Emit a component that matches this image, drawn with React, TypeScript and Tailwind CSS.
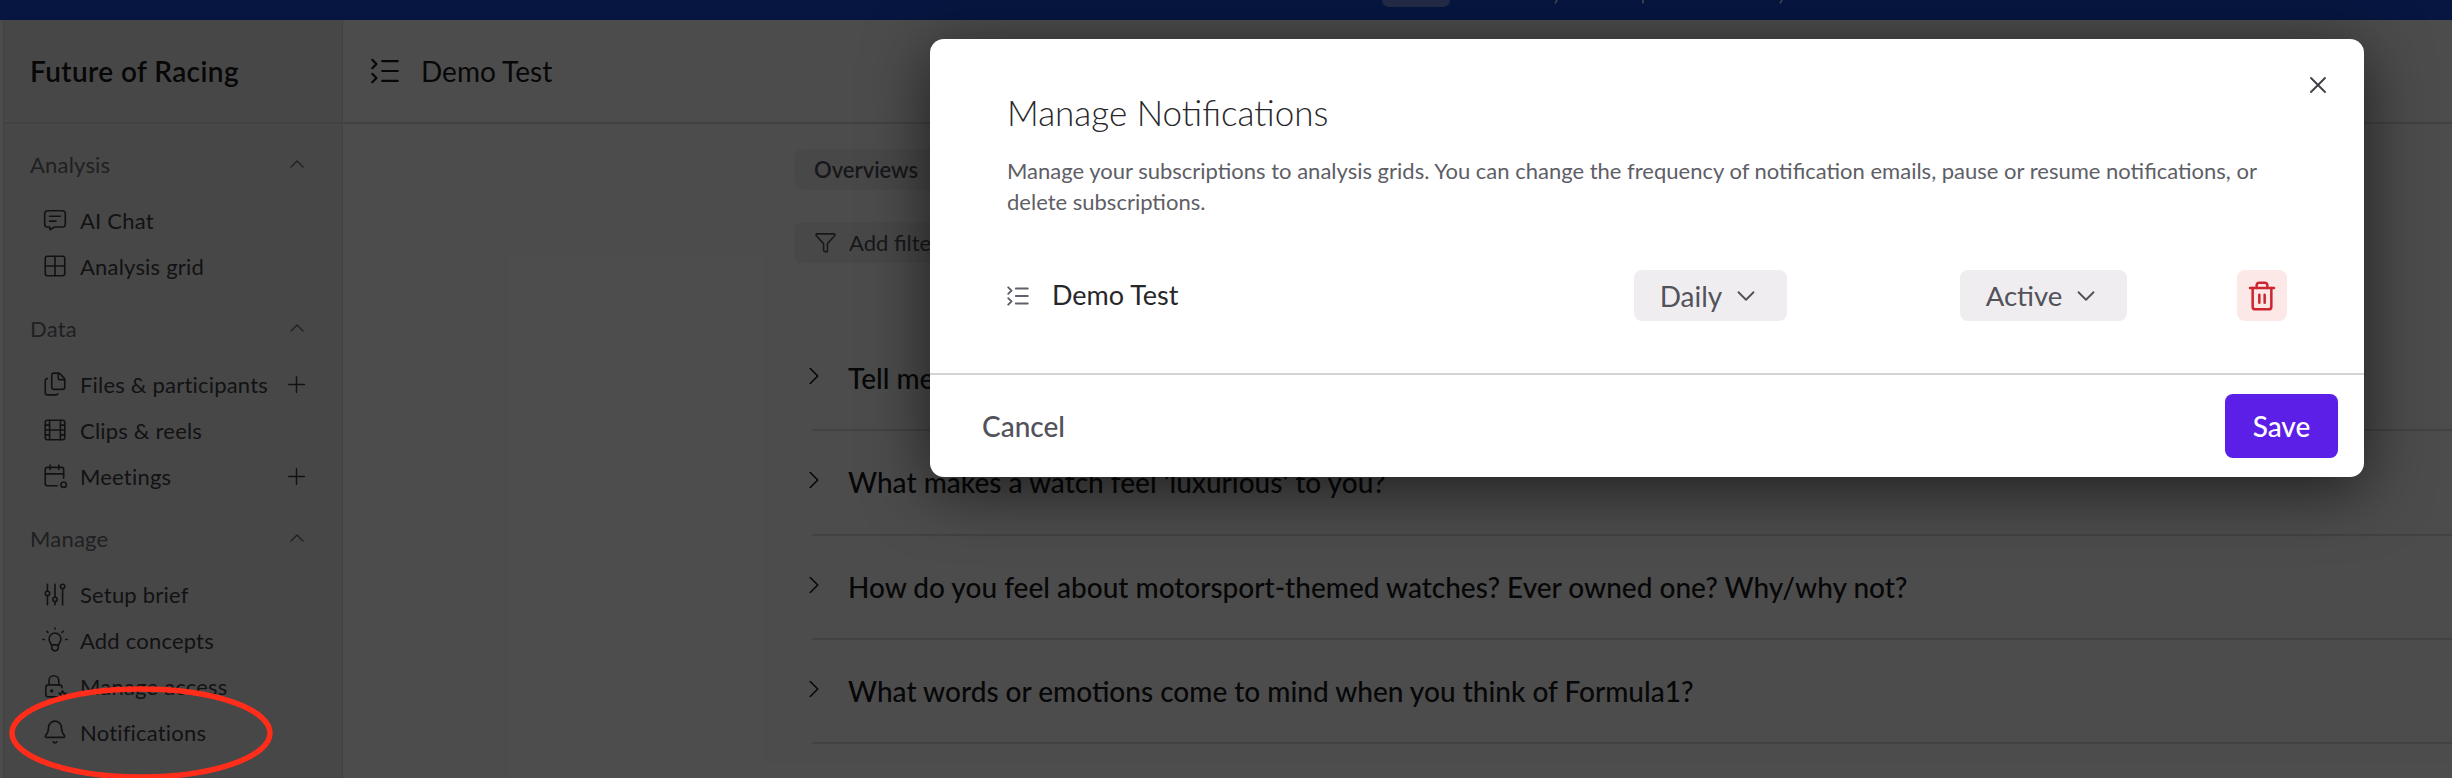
import {
  Bell,
  ChevronDown,
  ChevronRight,
  ChevronUp,
  Files,
  Film,
  Filter,
  Grid2x2,
  ListCollapse,
  Plus,
  Trash2,
  X,
} from 'lucide-react';
import type { ComponentType } from 'react';

// ---------------------------------------------------------------------------
// Icons the package has no close match for
// ---------------------------------------------------------------------------

type IconProps = { size?: number; strokeWidth?: number };

function ChatIcon({ size = 26, strokeWidth = 1.6 }: IconProps) {
  return (
    <svg width={size} height={size} viewBox="0 0 24 24" fill="none" stroke="currentColor" strokeWidth={strokeWidth} strokeLinecap="round" strokeLinejoin="round">
      <path d="M5 3.5h14a2.5 2.5 0 0 1 2.5 2.5v10a2.5 2.5 0 0 1-2.5 2.5h-7.5l-4 2.5-.5-2.5H5A2.5 2.5 0 0 1 2.5 16V6A2.5 2.5 0 0 1 5 3.5Z" />
      <path d="M7 8.5h10M7 13h6" />
    </svg>
  );
}

function CalendarDotIcon({ size = 26, strokeWidth = 1.6 }: IconProps) {
  return (
    <svg width={size} height={size} viewBox="0 0 24 24" fill="none" stroke="currentColor" strokeWidth={strokeWidth} strokeLinecap="round" strokeLinejoin="round">
      <path d="M14 21H5a2 2 0 0 1-2-2V6a2 2 0 0 1 2-2h13a2 2 0 0 1 2 2v8" />
      <path d="M3 10h17M7.5 2v4M15.5 2v4" />
      <circle cx="20" cy="20" r="2.5" />
    </svg>
  );
}

function SlidersIcon({ size = 26, strokeWidth = 1.6 }: IconProps) {
  return (
    <svg width={size} height={size} viewBox="0 0 24 24" fill="none" stroke="currentColor" strokeWidth={strokeWidth} strokeLinecap="round" strokeLinejoin="round">
      <path d="M5 3v6.5M5 13.5V22M12 3v12M12 19v3M19 7v15" />
      <circle cx="5" cy="11.5" r="2" />
      <circle cx="12" cy="17" r="2" />
      <circle cx="19" cy="5" r="2" />
    </svg>
  );
}

function BulbIcon({ size = 26, strokeWidth = 1.6 }: IconProps) {
  return (
    <svg width={size} height={size} viewBox="0 0 24 24" fill="none" stroke="currentColor" strokeWidth={strokeWidth} strokeLinecap="round" strokeLinejoin="round">
      <path d="M8.6 16.5c0-1.6-2.1-2.6-2.1-5.5a5.5 5.5 0 0 1 11 0c0 2.9-2.1 3.9-2.1 5.5Z" />
      <path d="M9 16.5V19a3 3 0 0 0 6 0v-2.5M.8 11.5h1.4M21.8 11.5h1.4M4.5 4l1 1M19.5 4l-1 1M12 1v.8" />
    </svg>
  );
}

function LockStarIcon({ size = 26, strokeWidth = 1.6 }: IconProps) {
  return (
    <svg width={size} height={size} viewBox="0 0 24 24" fill="none" stroke="currentColor" strokeWidth={strokeWidth} strokeLinecap="round" strokeLinejoin="round">
      <path d="M14 22H6a2.5 2.5 0 0 1-2.5-2.5v-6A2.5 2.5 0 0 1 6 11h10a2.5 2.5 0 0 1 2.5 2.5" />
      <path d="M6.5 11V7a4.5 4.5 0 0 1 9 0v4" />
      <circle cx="9" cy="16.5" r="0.8" fill="currentColor" />
      <path d="m19 16.5 1 2 2.2.3-1.6 1.5.4 2.2-2-1-2 1 .4-2.2-1.6-1.5 2.2-.3Z" />
    </svg>
  );
}

// ---------------------------------------------------------------------------
// Config
// ---------------------------------------------------------------------------

type NavItem = { label: string; icon: ComponentType<IconProps>; add?: boolean };

const NAV: { title: string; items: NavItem[] }[] = [
  {
    title: 'Analysis',
    items: [
      { label: 'AI Chat', icon: ChatIcon },
      { label: 'Analysis grid', icon: Grid2x2 },
    ],
  },
  {
    title: 'Data',
    items: [
      { label: 'Files & participants', icon: Files, add: true },
      { label: 'Clips & reels', icon: Film },
      { label: 'Meetings', icon: CalendarDotIcon, add: true },
    ],
  },
  {
    title: 'Manage',
    items: [
      { label: 'Setup brief', icon: SlidersIcon },
      { label: 'Add concepts', icon: BulbIcon },
      { label: 'Manage access', icon: LockStarIcon },
      { label: 'Notifications', icon: Bell },
    ],
  },
];

const QUESTIONS = [
  'Tell me about your relationship with watches.',
  "What makes a watch feel 'luxurious' to you?",
  'How do you feel about motorsport-themed watches? Ever owned one? Why/why not?',
  'What words or emotions come to mind when you think of Formula1?',
];

// ---------------------------------------------------------------------------
// Page behind the dialog
// ---------------------------------------------------------------------------

function TopBar() {
  return (
    <div className="flex h-[20px] shrink-0 items-start overflow-hidden bg-[#174ad5]">
      <div className="ml-[1382px] h-[7px] w-[68px] rounded-b-lg bg-[#758ff0]" />
      {/* tails of the banner text, which is cut off by the window edge */}
      <svg className="ml-[100px]" width="240" height="4" viewBox="0 0 240 4" fill="none" stroke="#ffffff" strokeWidth="1.5">
        <path d="M7 0 5 3.5M93 0v3.5M232 0l-2 3.5" />
      </svg>
    </div>
  );
}

function Sidebar() {
  return (
    <aside className="ml-[3px] flex w-[340px] shrink-0 flex-col border-x border-[#dcdcdc] bg-[#eeeeee]">
      <div className="flex h-[104px] shrink-0 items-center border-b-2 border-[#dedede] pl-[26px] text-[28px] font-semibold tracking-[0.4px] text-[#18181b]">
        Future of Racing
      </div>
      <nav className="flex flex-col gap-[16px] pt-[17px] pl-[26px] pr-[32px]">
        {NAV.map((group) => (
          <div key={group.title} className="flex flex-col">
            <div className="flex h-[46px] items-center justify-between text-[22px] tracking-[0.2px] text-[#6b6b72]">
              <span>{group.title}</span>
              <span className="flex w-[27px] justify-center">
                <ChevronUp size={24} strokeWidth={1.4} />
              </span>
            </div>
            <div className="flex flex-col pt-[10px]">
              {group.items.map(({ label, icon: Icon, add }) => (
                <div key={label} className="flex h-[46px] items-center pl-[12px] text-[22px] tracking-[0.2px] text-[#3f3f46]">
                  <span className="mr-[12px] flex w-[26px] shrink-0 justify-center">
                    <Icon size={26} strokeWidth={1.5} />
                  </span>
                  <span className="flex-1 whitespace-nowrap">{label}</span>
                  {add && <Plus size={27} strokeWidth={1.3} />}
                </div>
              ))}
            </div>
          </div>
        ))}
      </nav>
    </aside>
  );
}

function Main() {
  return (
    <main className="flex min-w-0 flex-1 flex-col bg-white">
      <div className="flex h-[104px] shrink-0 items-center gap-[19px] border-b-2 border-[#dedede] pl-[25px] text-[28px] text-[#18181b]">
        <ListCollapse size={34} strokeWidth={1.5} />
        <span>Demo Test</span>
      </div>
      <div className="flex flex-col pl-[451px] pt-[25px]">
        <div className="flex h-[41px] w-[200px] items-center rounded-lg bg-[#f0f0f2] pl-[20px] text-[22px] font-semibold text-[#52525b]">
          Overviews
        </div>
        <div className="mt-[32px] flex h-[41px] w-[200px] items-center gap-[12px] rounded-lg bg-[#f0f0f2] pl-[20px] text-[22px] text-[#52525b]">
          <Filter size={23} strokeWidth={1.6} />
          <span>Add filter</span>
        </div>
        <div className="mt-[64px] flex flex-col pl-[18px]">
          {QUESTIONS.map((q) => (
            <div key={q} className="flex h-[104.3px] items-center gap-[19px] border-b-2 border-[#dedede] text-[28px] font-medium text-[#18181b]">
              <ChevronRight size={30} strokeWidth={1.3} className="mb-[4px] ml-[-13px]" />
              <span className="whitespace-nowrap">{q}</span>
            </div>
          ))}
        </div>
      </div>
    </main>
  );
}

// ---------------------------------------------------------------------------
// Dialog
// ---------------------------------------------------------------------------

function Dialog() {
  return (
    <div className="absolute left-[930px] top-[39px] flex h-[438px] w-[1434px] flex-col rounded-[14px] bg-white shadow-[0_12px_64px_rgba(0,0,0,0.6)]">
      <div className="flex h-[334px] shrink-0 flex-col pl-[77px] pr-[32px]">
        <div className="flex justify-end pt-[32px]">
          <X size={28} strokeWidth={1.6} className="text-[#3f3f46]" />
        </div>
        <h2 className="mt-[-7px] text-[35px] font-light leading-[40px] text-[#27272a]">
          Manage Notifications
        </h2>
        <p className="mt-[23px] w-[1290px] text-[22px] leading-[31px] text-[#5e5e66]">
          Manage your subscriptions to analysis grids. You can change the frequency of notification emails, pause or resume notifications, or delete subscriptions.
        </p>
        <div className="mt-[53px] flex h-[51px] items-center">
          <ListCollapse size={26} strokeWidth={1.8} className="ml-[-2px] text-[#60606a]" />
          <span className="ml-[21px] w-[582px] text-[27px] text-[#27272a]">Demo Test</span>
          <div className="flex h-[51px] w-[153px] items-center justify-center gap-[9px] rounded-lg bg-[#efedf0] text-[28px] text-[#52525b]">
            Daily <ChevronDown size={30} strokeWidth={1.5} />
          </div>
          <div className="ml-[173px] flex h-[51px] w-[167px] items-center justify-center gap-[9px] rounded-lg bg-[#efedf0] text-[27.5px] text-[#52525b]">
            Active <ChevronDown size={30} strokeWidth={1.5} />
          </div>
          <div className="ml-[110px] flex h-[51px] w-[50px] items-center justify-center rounded-lg bg-[#fde8e8]">
            <Trash2 size={32} strokeWidth={1.9} className="text-[#cc2730]" />
          </div>
        </div>
      </div>
      <div className="flex flex-1 items-center justify-between border-t-2 border-[#d4d4d8] pl-[52px] pr-[26px]">
        <span className="text-[28px] font-medium text-[#52525b]">Cancel</span>
        <div className="flex h-[64px] w-[113px] items-center justify-center rounded-lg bg-[#5b1fe8] text-[28px] font-medium text-white">
          Save
        </div>
      </div>
    </div>
  );
}

export default function App() {
  return (
    <div className="relative flex h-[778px] w-[2452px] flex-col overflow-hidden bg-white font-['Lato',sans-serif]">
      <TopBar />
      <div className="flex min-h-0 flex-1">
        <Sidebar />
        <Main />
      </div>
      <div className="absolute inset-0 bg-black/70" />
      <Dialog />
      <svg className="absolute left-[8px] top-[686px]" width="268" height="92" viewBox="0 0 268 92" fill="none">
        <ellipse cx="133" cy="47" rx="129" ry="44" stroke="#ff2d1a" strokeWidth="5.5" />
      </svg>
    </div>
  );
}
